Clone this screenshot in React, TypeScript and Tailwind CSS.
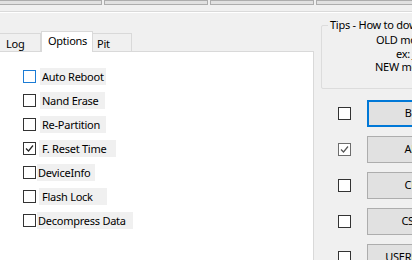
import React from 'react';

interface Opt {
  label: string;
  width: number;
  gap: number;
  pad: number;
  checked?: boolean;
  focus?: boolean;
}

const options: Opt[] = [
  { label: 'Auto Reboot', width: 66, gap: 4, pad: 2, focus: true },
  { label: 'Nand Erase', width: 65, gap: 4, pad: 2 },
  { label: 'Re-Partition', width: 66, gap: 4, pad: 2 },
  { label: 'F. Reset Time', width: 77, gap: 3, pad: 3, checked: true },
  { label: 'DeviceInfo', width: 58, gap: 1, pad: 1 },
  { label: 'Flash Lock', width: 68, gap: 3, pad: 3 },
  { label: 'Decompress Data', width: 96, gap: 1, pad: 1 },
];

const files = [
  { name: 'BL', focus: true },
  { name: 'AP', checked: true },
  { name: 'CP' },
  { name: 'CSC' },
  { name: 'USERDATA' },
];

function Check({ checked, focus, soft }: { checked?: boolean; focus?: boolean; soft?: boolean }) {
  const border = focus ? 'border-[#1c7cd5]' : soft ? 'border-[#6d6d6d]' : 'border-[#333333]';
  return (
    <div className={`w-[13px] h-[13px] shrink-0 border bg-white flex items-center justify-center ${border}`}>
      {checked && (
        <svg width="9" height="9" viewBox="0 0 9 9">
          <path d="M1 4.5 L3.5 7 L8 1.5" fill="none" stroke={soft ? '#555' : '#222'} strokeWidth="1.2" />
        </svg>
      )}
    </div>
  );
}

export default function App() {
  return (
    <div
      className="w-[412px] h-[260px] overflow-hidden bg-[#f0f0f0] text-[11px] tracking-[-0.25px] text-black"
      style={{ fontFamily: '"Segoe UI", "Noto Sans", sans-serif' }}
    >
      {/* bottoms of the button row above */}
      <div className="flex h-[5px] gap-[2px] -mt-[20px] box-content pt-[20px]">
        <div className="w-[103px] shrink-0 bg-[#e1e1e1] border border-[#adadad] -ml-px" />
        <div className="w-[104px] shrink-0 bg-[#e1e1e1] border border-[#adadad]" />
        <div className="w-[104px] shrink-0 bg-[#e1e1e1] border border-[#adadad]" />
        <div className="w-[104px] shrink-0 bg-[#e1e1e1] border border-[#adadad]" />
      </div>
      <div className="mt-[6px] h-[2px] border-t border-[#dadada] border-b border-b-white" />

      <div className="flex">
        {/* tabs */}
        <div className="w-[314px] shrink-0 pt-[18px]">
          <div className="flex items-end h-[20px]">
            <div className="h-[18px] w-[42px] -ml-px border border-b-0 border-[#d9d9d9] pl-[6px] leading-[19px]">Log</div>
            <div className="h-[21px] w-[52px] -mb-px relative z-10 bg-white border border-b-0 border-[#d9d9d9] pl-[6px] leading-[18px]">Options</div>
            <div className="h-[18px] w-[39px] border border-b-0 border-l-0 border-[#d9d9d9] pl-[4px] leading-[19px]">Pit</div>
          </div>
          <div className="h-[230px] bg-white border-t border-r border-[#d9d9d9] pt-[16px] pl-[23px] flex flex-col gap-[7px]">
            {options.map((o) => (
              <div key={o.label} className="flex items-center h-[17px]">
                <Check checked={o.checked} focus={o.focus} />
                <div
                  className="h-[17px] bg-[#f0f0f0] leading-[17px] whitespace-nowrap"
                  style={{ width: o.width, marginLeft: o.gap, paddingLeft: o.pad }}
                >
                  {o.label}
                </div>
              </div>
            ))}
          </div>
        </div>

        {/* right column */}
        <div className="pl-[7px] pt-[12px] w-[200px] shrink-0">
          <div className="relative h-[64px] border border-[#dcdcdc] rounded-[2px]">
            <div className="absolute -top-[9px] left-[6px] bg-[#f0f0f0] px-[2px] leading-[16px] whitespace-nowrap">
              Tips - How to download
            </div>
            <div className="pt-[7px] leading-[13.5px] whitespace-nowrap">
              <div className="ml-[54px]">OLD models: AP only</div>
              <div className="ml-[74px]">ex: J7, S6, A5</div>
              <div className="ml-[53px]">NEW models: BL+AP+CP+CSC</div>
            </div>
          </div>

          <div className="mt-[11px] flex flex-col gap-[9px]">
            {files.map((f) => (
              <div key={f.name} className="flex items-center h-[27px]">
                <div className="ml-[17px]">
                  <Check checked={f.checked} soft={f.checked} />
                </div>
                <div
                  className={`ml-[16px] w-[88px] h-[27px] shrink-0 bg-[#e1e1e1] flex items-center justify-center ${
                    f.focus ? 'border-2 border-[#0078d7]' : 'border border-[#adadad]'
                  }`}
                >
                  {f.name}
                </div>
              </div>
            ))}
          </div>
        </div>
      </div>
    </div>
  );
}
